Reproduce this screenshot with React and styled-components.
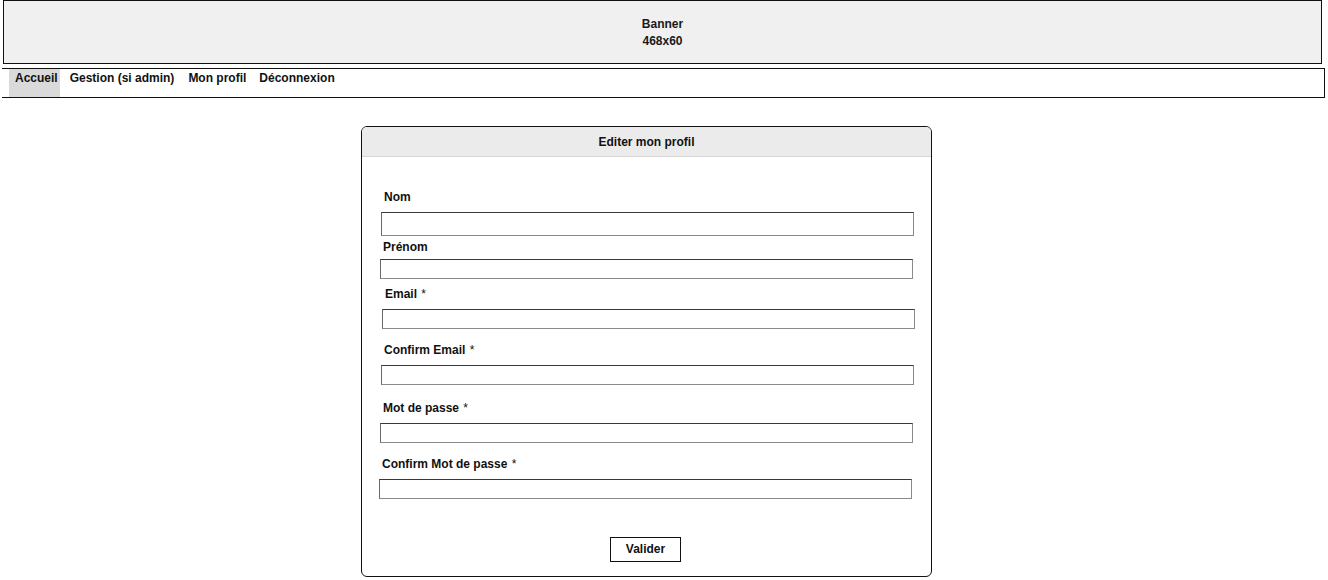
import React from 'react';
import styled, { createGlobalStyle } from 'styled-components';

const GlobalStyle = createGlobalStyle`
  body {
    margin: 0;
    background: #fff;
    font-family: "Liberation Sans", Arial, sans-serif;
    color: #111;
  }
`;

const Banner = styled.div`
  margin-left: 3px;
  width: 1319px;
  height: 64px;
  box-sizing: border-box;
  border: 1px solid #111;
  background: #f0f0f0;
  display: flex;
  flex-direction: column;
  align-items: center;
  justify-content: center;
  padding-top: 1px;
  font-size: 12px;
  font-weight: bold;
  line-height: 17px;
  color: #1a1a1a;
`;

const Nav = styled.nav`
  margin: 4px 0 0 2px;
  width: 1323px;
  height: 30px;
  box-sizing: border-box;
  border: 1px solid #111;
  border-left: none;
  display: flex;
  padding-left: 7px;
`;

const NavItem = styled.a`
  display: block;
  height: 28px;
  padding: 2px 2px 0 6px;
  margin-right: ${(p) => p.$gap}px;
  box-sizing: border-box;
  font-size: 12px;
  font-weight: bold;
  line-height: 14px;
  color: #111;
  background: ${(p) => (p.$active ? '#dadada' : 'transparent')};
`;

const Card = styled.section`
  margin: 28px 0 0 361px;
  width: 571px;
  height: 451px;
  box-sizing: border-box;
  border: 1px solid #111;
  border-radius: 6px;
  overflow: hidden;
  display: flex;
  flex-direction: column;
`;

const CardHeader = styled.header`
  height: 30px;
  box-sizing: border-box;
  background: #ebebeb;
  border-bottom: 1px solid #d4d4d4;
  display: flex;
  align-items: center;
  justify-content: center;
  font-size: 12px;
  font-weight: bold;
  color: #111;
`;

const CardBody = styled.div`
  display: flex;
  flex-direction: column;
  padding-top: 32px;
`;

const Label = styled.label`
  display: block;
  margin: ${(p) => p.$top}px 0 0 ${(p) => p.$x + 3}px;
  height: 14px;
  font-size: 12px;
  font-weight: bold;
  line-height: 14px;
  color: #111;
`;

const Required = styled.span`
  font-weight: normal;
  margin-left: 1px;
`;

const Input = styled.input`
  display: block;
  margin: ${(p) => p.$top}px 0 0 ${(p) => p.$x}px;
  width: 533px;
  height: ${(p) => p.$h}px;
  box-sizing: border-box;
  border: 1px solid #8a8a8a;
  border-top-color: #3a3a3a;
  border-left-color: #6a6a6a;
  padding: 0 4px;
  background: #fff;
  outline: none;
`;

const Actions = styled.div`
  display: flex;
  justify-content: center;
  margin-top: 38px;
  padding-right: 2px;
`;

const Button = styled.button`
  width: 71px;
  height: 25px;
  box-sizing: border-box;
  border: 1px solid #111;
  background: #fff;
  font-family: "Liberation Sans", Arial, sans-serif;
  font-size: 12px;
  font-weight: bold;
  color: #111;
  padding: 0 0 1px;
  cursor: pointer;
`;

const fields = [
  { label: 'Nom', x: 19, labelTop: 1, inputTop: 8, h: 24 },
  { label: 'Prénom', x: 18, labelTop: 4, inputTop: 5, h: 20 },
  { label: 'Email', req: true, x: 20, labelTop: 8, inputTop: 8, h: 20 },
  { label: 'Confirm Email', req: true, x: 19, labelTop: 14, inputTop: 8, h: 20 },
  { label: 'Mot de passe', req: true, x: 18, labelTop: 16, inputTop: 8, h: 20, pw: true },
  { label: 'Confirm Mot de passe', req: true, x: 17, labelTop: 14, inputTop: 8, h: 20, pw: true },
];

const navItems = [
  { label: 'Accueil', active: true, gap: 4 },
  { label: 'Gestion (si admin)', gap: 6 },
  { label: 'Mon profil', gap: 5 },
  { label: 'Déconnexion', gap: 0 },
];

export default function App() {
  return (
    <>
      <GlobalStyle />
      <Banner>
        <span>Banner</span>
        <span>468x60</span>
      </Banner>

      <Nav>
        {navItems.map((item) => (
          <NavItem key={item.label} $active={item.active} $gap={item.gap}>
            {item.label}
          </NavItem>
        ))}
      </Nav>

      <Card>
        <CardHeader>Editer mon profil</CardHeader>
        <CardBody>
          {fields.map((f) => (
            <React.Fragment key={f.label}>
              <Label $x={f.x} $top={f.labelTop}>
                {f.label}
                {f.req && <Required> *</Required>}
              </Label>
              <Input $x={f.x} $top={f.inputTop} $h={f.h} type={f.pw ? 'password' : 'text'} />
            </React.Fragment>
          ))}
          <Actions>
            <Button type="button">Valider</Button>
          </Actions>
        </CardBody>
      </Card>
    </>
  );
}
